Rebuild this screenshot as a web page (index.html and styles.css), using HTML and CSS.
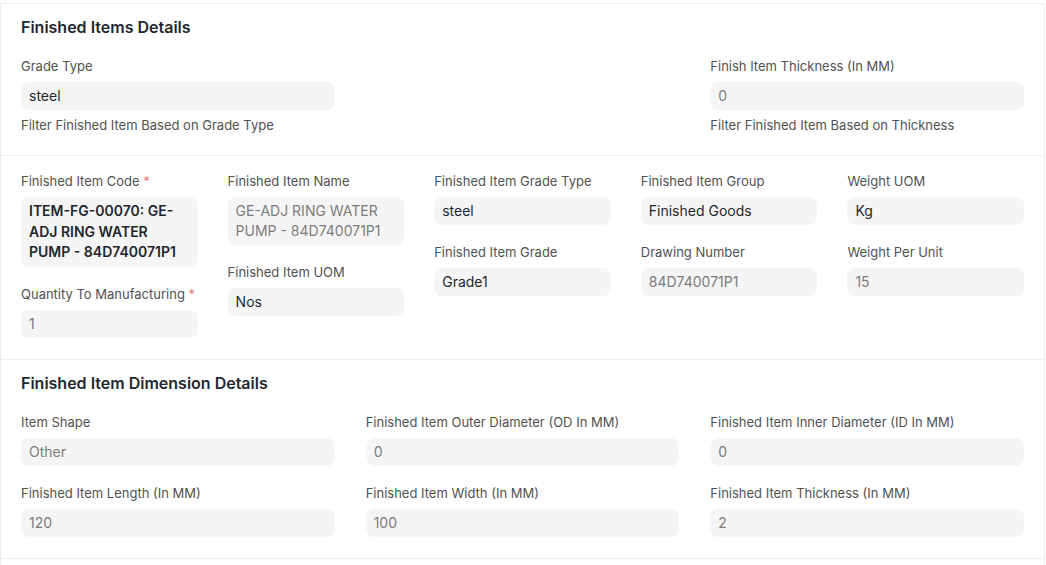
FILE: index.html
```html
<!DOCTYPE html>
<html lang="en">
<head>
  <meta charset="UTF-8" />
  <title>Finished Items Details</title>
  <link rel="stylesheet" href="styles.css">
</head>
<body>

  <div class="form-card">

    <!-- Finished Items Details -->
    <section class="form-section">
      <h3 class="section-title">Finished Items Details</h3>
      <div class="grid-3">
        <div class="field">
          <div class="label">Grade Type</div>
          <div class="input">steel</div>
          <div class="desc">Filter Finished Item Based on Grade Type</div>
        </div>
        <div></div>
        <div class="field">
          <div class="label">Finish Item Thickness (In MM)</div>
          <div class="input muted">0</div>
          <div class="desc">Filter Finished Item Based on Thickness</div>
        </div>
      </div>
    </section>

    <!-- Item info -->
    <section class="form-section no-title">
      <div class="grid-5">
        <div class="column">
          <div class="field">
            <div class="label">Finished Item Code <span class="req">*</span></div>
            <div class="input bold">ITEM-FG-00070: GE-ADJ RING WATER PUMP - 84D740071P1</div>
          </div>
          <div class="field">
            <div class="label">Quantity To Manufacturing <span class="req">*</span></div>
            <div class="input muted">1</div>
          </div>
        </div>
        <div class="column">
          <div class="field">
            <div class="label">Finished Item Name</div>
            <div class="input muted">GE-ADJ RING WATER PUMP - 84D740071P1</div>
          </div>
          <div class="field">
            <div class="label">Finished Item UOM</div>
            <div class="input">Nos</div>
          </div>
        </div>
        <div class="column">
          <div class="field">
            <div class="label">Finished Item Grade Type</div>
            <div class="input">steel</div>
          </div>
          <div class="field">
            <div class="label">Finished Item Grade</div>
            <div class="input">Grade1</div>
          </div>
        </div>
        <div class="column">
          <div class="field">
            <div class="label">Finished Item Group</div>
            <div class="input">Finished Goods</div>
          </div>
          <div class="field">
            <div class="label">Drawing Number</div>
            <div class="input muted">84D740071P1</div>
          </div>
        </div>
        <div class="column">
          <div class="field">
            <div class="label">Weight UOM</div>
            <div class="input">Kg</div>
          </div>
          <div class="field">
            <div class="label">Weight Per Unit</div>
            <div class="input muted">15</div>
          </div>
        </div>
      </div>
    </section>

    <!-- Dimension details -->
    <section class="form-section">
      <h3 class="section-title">Finished Item Dimension Details</h3>
      <div class="grid-3">
        <div class="field">
          <div class="label">Item Shape</div>
          <div class="input muted">Other</div>
        </div>
        <div class="field">
          <div class="label">Finished Item Outer Diameter (OD In MM)</div>
          <div class="input muted">0</div>
        </div>
        <div class="field">
          <div class="label">Finished Item Inner Diameter (ID In MM)</div>
          <div class="input muted">0</div>
        </div>
        <div class="field">
          <div class="label">Finished Item Length (In MM)</div>
          <div class="input muted">120</div>
        </div>
        <div class="field">
          <div class="label">Finished Item Width (In MM)</div>
          <div class="input muted">100</div>
        </div>
        <div class="field">
          <div class="label">Finished Item Thickness (In MM)</div>
          <div class="input muted">2</div>
        </div>
      </div>
    </section>

    <section class="form-section empty"></section>

  </div>

</body>
</html>
```

FILE: styles.css
```css
* {
  box-sizing: border-box;
  margin: 0;
  padding: 0;
  font-family: 'Inter', 'Noto Sans', sans-serif;
}

body {
  background: #ffffff;
  color: #1f272e;
}

.form-card {
  margin-top: 3px;
  width: 1045px;
  border: 1px solid #ededed;
  border-bottom: none;
  background: #fff;
}

.form-section {
  padding: 13px 20px 2px;
  border-bottom: 1px solid #ededed;
}

.form-section.no-title {
  padding-top: 17px;
}

.form-section.empty {
  height: 20px;
  border-bottom: none;
}

.section-title {
  font-size: 16px;
  line-height: 20px;
  font-weight: 600;
  color: #1f272e;
  margin-bottom: 21px;
}

.grid-3 {
  display: grid;
  grid-template-columns: repeat(3, 1fr);
  column-gap: 31px;
}

.grid-5 {
  display: grid;
  grid-template-columns: repeat(5, 1fr);
  column-gap: 30px;
}

.column {
  display: flex;
  flex-direction: column;
}

.field {
  margin-bottom: 19px;
}

.label {
  font-size: 13px;
  line-height: 16px;
  color: #525252;
  margin-bottom: 8px;
}

.req {
  color: #e67c7c;
}

.input {
  background: #f5f5f5;
  border-radius: 8px;
  padding: 4px 8px;
  min-height: 28px;
  font-size: 14px;
  line-height: 20px;
  color: #1f272e;
}

.input.muted {
  color: #7c7c7c;
}

.input.bold {
  font-weight: 600;
  line-height: 20.5px;
}

.desc {
  margin-top: 7px;
  font-size: 13px;
  line-height: 17px;
  color: #525252;
}
```
